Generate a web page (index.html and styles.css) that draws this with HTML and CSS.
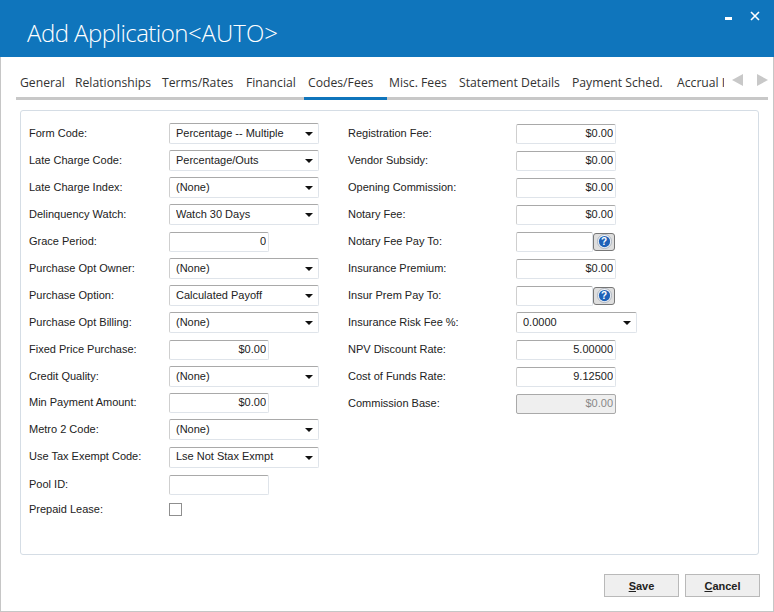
FILE: index.html
```html
<!DOCTYPE html>
<html lang="en">
<head>
<meta charset="utf-8">
<title>Add Application</title>
<link rel="stylesheet" href="styles.css">
</head>
<body>
<div class="window">
  <header class="titlebar">
    <h1 class="title">Add Application<span class="title-tag">&lt;AUTO&gt;</span></h1>
    <div class="winctl">
      <svg width="9" height="4" viewBox="0 0 9 4"><rect x="1" y="0" width="7" height="3" fill="#fff"/></svg>
      <svg width="10" height="10" viewBox="0 0 10 10"><path d="M1 1l8 8M9 1l-8 8" stroke="#fff" stroke-width="1.6" fill="none"/></svg>
    </div>
  </header>
  <nav class="tabs">
    <div class="tablist">
      <a class="tab t1">General</a>
      <a class="tab t2">Relationships</a>
      <a class="tab t3">Terms/Rates</a>
      <a class="tab t4">Financial</a>
      <a class="tab t5 active">Codes/Fees</a>
      <a class="tab t6">Misc. Fees</a>
      <a class="tab t7">Statement Details</a>
      <a class="tab t8">Payment Sched.</a>
      <a class="tab t9">Accrual Info</a>
    </div>
    <div class="tabarrows">
      <svg width="11" height="12" viewBox="0 0 11 12"><path d="M11 0v12L0 6z" fill="#c8c8c8"/></svg>
      <svg width="11" height="12" viewBox="0 0 11 12"><path d="M0 0v12l11-6z" fill="#c8c8c8"/></svg>
    </div>
  </nav>
  <main class="panel">
    <section class="col col-left">
      <div class="row"><label>Form Code:</label><span class="sel"><select><option>Percentage -- Multiple</option></select></span></div>
      <div class="row"><label>Late Charge Code:</label><span class="sel"><select><option>Percentage/Outs</option></select></span></div>
      <div class="row"><label>Late Charge Index:</label><span class="sel"><select><option>(None)</option></select></span></div>
      <div class="row"><label>Delinquency Watch:</label><span class="sel"><select><option>Watch 30 Days</option></select></span></div>
      <div class="row"><label>Grace Period:</label><input class="num" value="0"></div>
      <div class="row"><label>Purchase Opt Owner:</label><span class="sel"><select><option>(None)</option></select></span></div>
      <div class="row"><label>Purchase Option:</label><span class="sel"><select><option>Calculated Payoff</option></select></span></div>
      <div class="row"><label>Purchase Opt Billing:</label><span class="sel"><select><option>(None)</option></select></span></div>
      <div class="row"><label>Fixed Price Purchase:</label><input class="num" value="$0.00"></div>
      <div class="row"><label>Credit Quality:</label><span class="sel"><select><option>(None)</option></select></span></div>
      <div class="row row-short"><label>Min Payment Amount:</label><input class="num" value="$0.00"></div>
      <div class="row"><label>Metro 2 Code:</label><span class="sel"><select><option>(None)</option></select></span></div>
      <div class="row row-tall"><label>Use Tax Exempt Code:</label><span class="sel"><select><option>Lse Not Stax Exmpt</option></select></span></div>
      <div class="row"><label>Pool ID:</label><input class="num" value=""></div>
      <div class="row row-check"><label>Prepaid Lease:</label><input class="check" type="checkbox"></div>
    </section>
    <section class="col col-right">
      <div class="row"><label>Registration Fee:</label><input class="num" value="$0.00"></div>
      <div class="row"><label>Vendor Subsidy:</label><input class="num" value="$0.00"></div>
      <div class="row"><label>Opening Commission:</label><input class="num" value="$0.00"></div>
      <div class="row"><label>Notary Fee:</label><input class="num" value="$0.00"></div>
      <div class="row"><label>Notary Fee Pay To:</label><input class="lookup" value=""><button class="help" type="button"><svg viewBox="0 0 16 16"><circle cx="8" cy="8" r="7.5" fill="#f4f6fa" stroke="#a8b0bc"/><circle cx="8" cy="8" r="6" fill="#1f62b8"/></svg><span>?</span></button></div>
      <div class="row"><label>Insurance Premium:</label><input class="num" value="$0.00"></div>
      <div class="row"><label>Insur Prem Pay To:</label><input class="lookup" value=""><button class="help" type="button"><svg viewBox="0 0 16 16"><circle cx="8" cy="8" r="7.5" fill="#f4f6fa" stroke="#a8b0bc"/><circle cx="8" cy="8" r="6" fill="#1f62b8"/></svg><span>?</span></button></div>
      <div class="row"><label>Insurance Risk Fee %:</label><span class="sel sel-wide"><select><option>0.0000</option></select></span></div>
      <div class="row"><label>NPV Discount Rate:</label><input class="num" value="5.00000"></div>
      <div class="row"><label>Cost of Funds Rate:</label><input class="num" value="9.12500"></div>
      <div class="row"><label>Commission Base:</label><input class="num disabled" value="$0.00" disabled></div>
    </section>
  </main>
  <footer class="actions">
    <button class="btn" type="button"><u>S</u>ave</button>
    <button class="btn" type="button"><u>C</u>ancel</button>
  </footer>
</div>
</body>
</html>
```
FILE: styles.css
```css
* { box-sizing: border-box; }
html, body { margin: 0; height: 100%; overflow: hidden; background: #fff; }
.window {
  width: 774px; height: 612px;
  display: flex; flex-direction: column;
  border: 1px solid #c6c6c6; border-top: 0;
  background: #fff;
  font-family: "Liberation Sans", Arial, sans-serif;
  font-size: 11px; color: #222;
}
.titlebar {
  height: 57px; margin: 0 -1px; flex: none;
  background: #0f75bc; color: #fff;
  display: flex; justify-content: space-between;
  padding: 0 14px 0 27px;
}
.title {
  margin: 0; padding-top: 16px;
  font: 300 24px/34px "Open Sans", sans-serif;
  letter-spacing: -.53px;
}
.title-tag { letter-spacing: 0; }
.winctl { display: flex; gap: 17px; align-items: flex-start; padding-top: 11px; }
.winctl svg:first-child { margin-top: 6px; }
.tabs {
  height: 43px; margin: 0 5px 0 15px; flex: none;
  display: flex; justify-content: space-between;
  border-bottom: 3px solid #c8c8c8;
  position: relative;
}
.tablist { display: flex; width: 711px; overflow: hidden; height: 43px; }
.tab {
  flex: none; height: 43px; padding: 16px 0 0 4px;
  font: 12.2px/19px "Open Sans", sans-serif;
  color: #333; white-space: nowrap;
  border-bottom: 3px solid transparent;
}
.t1 { width: 55px; }
.t2 { width: 87px; }
.t3 { width: 84px; }
.t4 { width: 62px; }
.t5 { width: 83px; }
.t6 { width: 70px; padding-left: 2px; }
.t7 { width: 113px; padding-left: 2px; }
.t8 { width: 105px; padding-left: 2px; }
.t9 { width: 49px; padding-left: 2px; overflow: hidden; }
.tab.active { border-bottom-color: #0f75bc; }
.tabarrows { display: flex; gap: 14px; padding-top: 17px; }
.panel {
  height: 445px; margin: 10px 14px 0 19px; flex: none;
  border: 1px solid #d5dde5; border-radius: 3px;
  display: flex; padding: 9px 8px 0;
}
.col { display: flex; flex-direction: column; }
.col-left { width: 319px; }
.row { height: 27px; flex: none; display: flex; align-items: center; }
.row-short { height: 26px; }
.row-tall { height: 28px; }
.row label { flex: none; width: 140px; position: relative; top: -1px; }
.col-right .row label { width: 168px; }
input, select {
  font: inherit; color: inherit; margin: 0; background: #fff;
  border: 1px solid #dfe4ea; border-top-color: #a9a9a9; border-left-color: #cfcfcf;
  border-radius: 2px; outline: 0;
}
.num { width: 100px; height: 20px; padding: 0 2px 2px; text-align: right; }
.num.disabled { background: #efefef; color: #888; border-color: #a9a9a9; }
.lookup { width: 77px; height: 20px; padding: 0 2px 2px; }
.sel { position: relative; display: block; width: 150px; }
.sel-wide { width: 121px; }
.sel select {
  appearance: none; -webkit-appearance: none;
  display: block; width: 100%; height: 21px; padding: 0 14px 2px 6px;
}
.sel::after {
  content: ""; position: absolute; right: 6px; top: 9px;
  border: 4px solid transparent; border-top: 4px solid #111; border-bottom: 0;
}
.help {
  width: 22px; height: 18px; padding: 0; position: relative;
  border: 1px solid #777; border-radius: 3px; background: #dedede;
  display: flex; align-items: center; justify-content: center;
}
.help svg { display: block; width: 15px; height: 15px; }
.help span {
  position: absolute; inset: 0; text-align: center;
  font: bold 10px/16px "Liberation Sans", sans-serif; color: #fff;
}
.row-check { height: 24px; }
.check {
  appearance: none; -webkit-appearance: none;
  width: 13px; height: 13px; border: 1px solid #8f8f8f; border-radius: 0; margin: 0;
  position: relative; top: -1px;
}
.actions {
  flex: 1; display: flex; justify-content: flex-end; gap: 6px;
  padding: 19px 13px 0 0;
}
.btn {
  width: 75px; height: 23px; padding: 0;
  background: #efefef; border: 1px solid #b9b9b9;
  font: bold 11px "Liberation Sans", sans-serif; color: #222;
}
```
